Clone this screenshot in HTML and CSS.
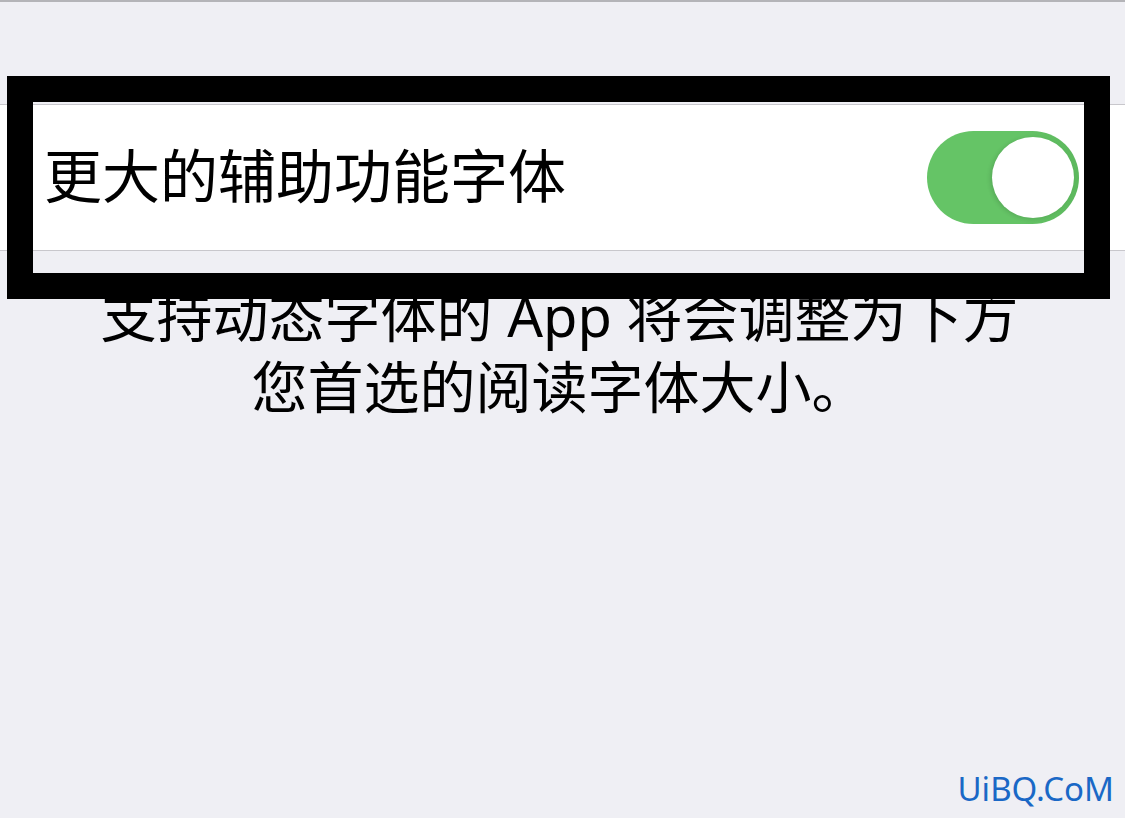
FILE: index.html
```html
<!DOCTYPE html>
<html lang="zh-CN">
<head>
    <meta charset="UTF-8">
    <meta name="viewport" content="width=device-width, initial-scale=1.0">
    <title>更大字体</title>
    <link rel="stylesheet" href="styles.css">
</head>
<body>
    <div class="screen">
        <div class="group">
            <div class="cell">
                <span class="cell-label">更大的辅助功能字体</span>
                <div class="switch is-on"><span class="knob"></span></div>
            </div>
        </div>
        <p class="footer">支持动态字体的 App 将会调整为下方<br>您首选的阅读字体大小。</p>

        <div class="highlight"></div>
        <div class="watermark">UiBQ.CoM</div>
    </div>
</body>
</html>
```

FILE: styles.css
```css
* {
    box-sizing: border-box;
    margin: 0;
    padding: 0;
}
html, body {
    height: 100%;
}
body {
    background-color: #efeff4;
    color: #000;
    font-family: "Noto Sans", "Noto Sans CJK SC", sans-serif;
}
.screen {
    border-top: 2px solid #b4b4b8;
    height: 818px;
    overflow: hidden;
    position: relative;
}
.group {
    padding-top: 102px;
}
.cell {
    align-items: center;
    background-color: #fff;
    border-bottom: 1px solid #c8c7cc;
    border-top: 1px solid #c8c7cc;
    display: flex;
    height: 147px;
    justify-content: space-between;
    padding: 0 46px 0 44px;
}
.cell-label {
    font-size: 58px;
    line-height: 1;
    padding-bottom: 4px;
}
.switch {
    background-color: #65c466;
    border-radius: 47px;
    height: 93px;
    padding: 6px 5px;
    position: relative;
    width: 152px;
}
.switch.is-on {
    background-image: linear-gradient(90deg, #65c466 0%, #65c466 60%, #5cb85d 100%);
}
.knob {
    background-color: #fff;
    border-radius: 50%;
    box-shadow: -2px 1px 4px rgba(0, 0, 0, .12);
    display: block;
    height: 81px;
    margin-left: auto;
    width: 82px;
}
.footer {
    font-family: "Noto Sans", "Noto Sans CJK SC", sans-serif;
    font-size: 56px;
    line-height: 71px;
    padding: 29px 6px 0 0;
    text-align: center;
}
/* annotation frame drawn over the screenshot */
.highlight {
    border: 26px solid #000;
    height: 223px;
    left: 7px;
    position: absolute;
    top: 74px;
    width: 1103px;
}
.watermark {
    bottom: 7px;
    color: #1a68c6;
    font-family: "Noto Sans", sans-serif;
    font-size: 33px;
    position: absolute;
    right: 11px;
}
```
